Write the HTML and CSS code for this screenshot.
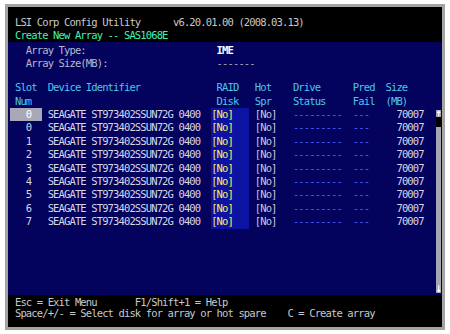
FILE: index.html
```html
<!DOCTYPE html>
<html lang="en">
<head>
  <meta charset="UTF-8" />
  <title>LSI Corp Config Utility</title>
  <link rel="stylesheet" href="styles.css">
</head>
<body>

  <div class="screen">
    <div class="top">
      <div class="line title"> LSI Corp Config Utility      v6.20.01.00 (2008.03.13)</div>
      <div class="line sub"> Create New Array -- SAS1068E</div>
    </div>

    <div class="panel">
      <div class="info">
        <div class="line">   Array Type:                        <span class="val">IME</span></div>
        <div class="line">   Array Size(MB):                    <span class="dim">-------</span></div>
      </div>

      <div class="heads">
        <div class="row"> Slot  Device Identifier              RAID   Hot    Drive      Pred  Size</div>
        <div class="row"> Num                                  Disk   Spr    Status     Fail  (MB)</div>
      </div>

      <div class="list">
        <div class="rows">
          <div class="row"><span class="slot sel">   0  </span><span> SEAGATE ST973402SSUN72G 0400  </span><span class="raid">[No]   </span><span class="hot"> [No]   </span><span class="dash">---------  ---     </span><span>70007</span></div>
          <div class="row"><span class="slot">   0  </span><span> SEAGATE ST973402SSUN72G 0400  </span><span class="raid">[No]   </span><span class="hot"> [No]   </span><span class="dash">---------  ---     </span><span>70007</span></div>
          <div class="row"><span class="slot">   1  </span><span> SEAGATE ST973402SSUN72G 0400  </span><span class="raid">[No]   </span><span class="hot"> [No]   </span><span class="dash">---------  ---     </span><span>70007</span></div>
          <div class="row"><span class="slot">   2  </span><span> SEAGATE ST973402SSUN72G 0400  </span><span class="raid">[No]   </span><span class="hot"> [No]   </span><span class="dash">---------  ---     </span><span>70007</span></div>
          <div class="row"><span class="slot">   3  </span><span> SEAGATE ST973402SSUN72G 0400  </span><span class="raid">[No]   </span><span class="hot"> [No]   </span><span class="dash">---------  ---     </span><span>70007</span></div>
          <div class="row"><span class="slot">   4  </span><span> SEAGATE ST973402SSUN72G 0400  </span><span class="raid">[No]   </span><span class="hot"> [No]   </span><span class="dash">---------  ---     </span><span>70007</span></div>
          <div class="row"><span class="slot">   5  </span><span> SEAGATE ST973402SSUN72G 0400  </span><span class="raid">[No]   </span><span class="hot"> [No]   </span><span class="dash">---------  ---     </span><span>70007</span></div>
          <div class="row"><span class="slot">   6  </span><span> SEAGATE ST973402SSUN72G 0400  </span><span class="raid">[No]   </span><span class="hot"> [No]   </span><span class="dash">---------  ---     </span><span>70007</span></div>
          <div class="row"><span class="slot">   7  </span><span> SEAGATE ST973402SSUN72G 0400  </span><span class="raid">[No]   </span><span class="hot"> [No]   </span><span class="dash">---------  ---     </span><span>70007</span></div>
        </div>

        <div class="scroll">
          <div class="arrow">
            <svg width="6" height="7" viewBox="0 0 6 7"><path d="M3 1.5V6.5M1.5 3L3 1L4.5 3" stroke="#fff" stroke-width="1.2" fill="none"/></svg>
          </div>
          <div class="thumb"></div>
          <div class="track"></div>
          <div class="arrow down">
            <svg width="6" height="9" viewBox="0 0 6 9"><path d="M3 1V7.5M1.5 6L3 8L4.5 6" stroke="#fff" stroke-width="1.2" fill="none"/></svg>
          </div>
        </div>
      </div>
    </div>

    <div class="foot">
      <div class="line"> Esc = Exit Menu       F1/Shift+1 = Help</div>
      <div class="line"> Space/+/- = Select disk for array or hot spare    C = Create array</div>
    </div>
  </div>

</body>
</html>
```

FILE: styles.css
```css
body {
  margin: 0;
  background-color: #fff;
}

.screen {
  margin: 4px 0 0 5px;
  width: 434px;
  height: 320px;
  border: 3px solid #a4a4a4;
  background-color: #000;
  display: flex;
  flex-direction: column;
  font-family: "DejaVu Sans Mono", monospace;
  font-size: 10.5px;
  letter-spacing: -0.872px;
  color: #d8d8e4;
}

.line {
  height: 12.5px;
  line-height: 12.5px;
  white-space: pre;
}

.top {
  height: 35px;
  box-sizing: border-box;
  padding: 9px 0 0 1.5px;
}

.title {
  color: #c8c8c8;
}

.sub {
  color: #44f0b4;
}

.panel {
  flex: 1;
  display: flex;
  flex-direction: column;
  background-color: #03035e;
  padding: 2px 0 0 1.5px;
}

.info {
  color: #b8b8cc;
}

.val {
  color: #fff;
  font-weight: bold;
}

.dim {
  color: #a8a8b8;
}

.heads {
  margin-top: 12.3px;
  color: #4cc6ea;
}

.row {
  display: flex;
  height: 13.4px;
  line-height: 13.4px;
  white-space: pre;
}

.list {
  flex: 1;
  display: flex;
}

.rows {
  flex: 1;
}

.slot.sel {
  background-color: #a8a8b6;
  color: #fff;
}

.raid {
  background-color: #0c12a2;
  color: #f4f45c;
}

.hot {
  color: #c8c8d4;
}

.dash {
  color: #4c5cf4;
}

.scroll {
  width: 5.5px;
  margin: 2px 1px 2px 0;
  display: flex;
  flex-direction: column;
  background-color: #a6a6b2;
}

.arrow {
  height: 7px;
  display: flex;
  justify-content: center;
}

.arrow.down {
  height: 9px;
}

.thumb {
  height: 10px;
  background-color: #000;
}

.track {
  flex: 1;
}

.foot {
  height: 32px;
  box-sizing: border-box;
  padding: 1.5px 0 0 1.5px;
  color: #c8c8c8;
}

.foot .line {
  height: 11px;
  line-height: 11px;
}
```
